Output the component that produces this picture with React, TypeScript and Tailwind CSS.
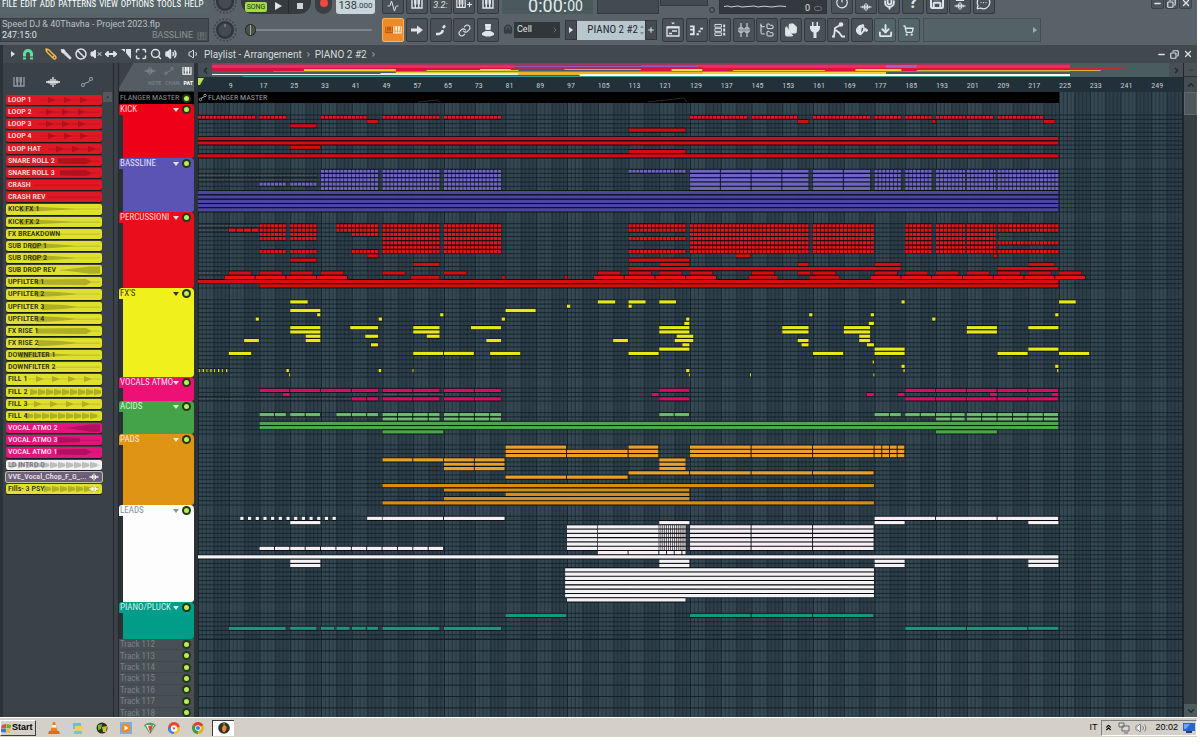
import type { ReactNode } from "react";
import clsx from "clsx";
import {
    Activity, Ban, Brush, ChevronDown, ChevronLeft, ChevronRight, ChevronUp, ChevronsUp,
    Copy, Download, Files, FolderTree, Link, Magnet, Maximize, MessageCircleMore, Mic, Minus,
    MoveHorizontal, Pencil, Plus, Pointer, Power, Save, Search, ShoppingCart,
    Volume1, Volume2, VolumeX, X,
} from "lucide-react";

const BAR = 3.844;
const ROW = 4.29;

// [row, first bar, last bar, segment length in bars, muted]
type Clip = [number, number, number, number?, boolean?];
type Group = { name: string; h: string; px: number; rows: number; bg: string; text: string; fill: string; soft: string; clips: Clip[] };

// puts the same bar ranges on several rows
const on = (rows: number[], ranges: [number, number, number?][]): Clip[] =>
    rows.flatMap((r) => ranges.map(([a, b, s]) => [r, a, b, s] as Clip));

const GROUPS: Group[] = [
    {
        name: "KICK", h: "h-[54px]", px: 54, rows: 10, bg: "bg-[#ee0019]", text: "text-[#ffd9d4]", fill: "#d30d14", soft: "#e61528",
        clips: [
            ...on([0], [[0, 15, 1], [16, 23, 1], [32, 36, 1], [36, 44, 1], [48, 63, 1], [64, 79, 1], [128, 143, 1], [144, 156, 1], [160, 175, 1], [176, 183, 1], [184, 191, 1], [192, 199.7, 1], [200, 207, 1], [208, 220, 1]]),
            ...on([1], [[44, 47], [156, 159], [191, 192], [220, 223]]),
            ...on([2], [[24, 31]]), ...on([3, 8], [[112, 127]]), ...on([5, 6, 9], [[0, 224]]), ...on([7], [[24, 32]]),
        ],
    },
    {
        name: "BASSLINE", h: "h-[54px]", px: 54, rows: 10, bg: "bg-[#5a55b4]", text: "text-[#e4e2ff]", fill: "#4b469f", soft: "#6c66c0",
        clips: [
            ...on([0, 1, 2, 3, 4], [[32, 47, 1], [48, 63, 1], [64, 79, 1], [128, 159, 8], [160, 175, 8], [176, 183, 1], [184, 191, 1], [192, 199.7, 1], [200, 207.7, 1], [208, 224, 1]]),
            ...on([0], [[112, 127, 1]]), ...on([3], [[16, 23, 1], [24, 31, 1]]),
            [1, 0, 31, 1, true], [2, 0, 31, 1, true],
            ...on([5, 6, 7, 8, 9], [[0, 224]]),
        ],
    },
    {
        name: "PERCUSSIONI", h: "h-[76px]", px: 76, rows: 15, bg: "bg-[#ea0e1c]", text: "text-[#ffd9d4]", fill: "#d40e12", soft: "#e2161a",
        clips: [
            [0, 0, 16, 1, true], [1, 0, 8, 1, true], [11, 0, 6, 1, true],
            ...on([0, 1, 2, 3, 6], [[16, 23, 1], [24, 31, 1]]),
            ...on([0], [[36, 47, 1]]), ...on([1], [[8, 16, 2], [36, 47, 1]]), ...on([2, 6], [[40, 47, 1]]),
            ...on([7], [[44, 47], [140, 143.8], [207, 208]]), ...on([8], [[24, 31], [112, 128]]),
            ...on([0, 1, 2, 3, 4, 5, 6], [[48, 63, 1], [64, 79, 1], [128, 159, 1], [160, 176, 1], [184, 191, 1], [192, 199.7, 1], [200, 207.7, 1]]),
            ...on([0, 1, 3, 6], [[112, 127, 1]]), ...on([0, 1, 4, 6], [[208, 224, 1]]),
            ...on([9], [[56, 63], [120, 128], [156, 159], [176, 183], [216, 223]]),
            ...on([10], [[112, 183], [208, 224]]),
            ...on([11], [[8, 14], [16, 22], [24, 30], [32, 38], [48, 54], [64, 70], [104, 110], [112, 118], [120, 126], [128, 134], [144, 150], [156, 159.5], [160, 166], [176, 182], [184, 190], [192, 198], [200, 206], [208, 214], [216, 222], [224, 230]]),
            ...on([12], [[7, 39, 8], [55.4, 63], [79, 80], [95.4, 96.2], [103, 135, 8], [143.3, 151], [159, 167], [175, 231, 8]]),
            ...on([13], [[0, 224]]), ...on([14], [[16, 224]]),
        ],
    },
    {
        name: "FX'S", h: "h-[89px]", px: 89, rows: 18, bg: "bg-[#f0f01c]", text: "text-[#3a3a08]", fill: "#e6e81c", soft: "#e6e81c",
        clips: [
            ...on([0], [[24, 28.7], [104, 108.7], [112, 116.6], [120, 124.5], [183, 184], [224, 228.5]]),
            ...on([1], [[96, 97], [112, 113]]), ...on([2], [[24, 32], [80, 88]]),
            ...on([3], [[31, 32], [63, 64], [159, 160], [175, 176], [223, 224]]),
            ...on([4], [[15, 16], [47, 48], [79, 80], [127, 128], [191, 192]]),
            ...on([5], [[126.5, 128], [174.5, 176]]),
            ...on([6], [[24, 32], [39.6, 47], [56, 63], [71, 79], [120, 128], [152, 159], [168, 175], [200, 208], [216, 224]]),
            ...on([7], [[24, 32], [56, 63], [120, 128], [152, 159], [168, 175], [200, 208]]),
            ...on([8], [[28, 32], [43.5, 47], [59.5, 63], [124.5, 129], [172, 175]]),
            ...on([9], [[12, 16], [28, 32], [75, 79], [108, 112], [124, 129], [156, 159], [172, 175]]),
            ...on([10], [[45, 47], [126, 128], [157, 159], [174, 176]]),
            ...on([11], [[120, 128], [176, 184], [216, 224]]),
            ...on([12], [[8, 14], [56, 72, 8], [76, 84], [112, 120], [160, 168], [176, 184], [208, 216], [224, 232]]),
            ...on([14], [[175.5, 176]]), ...on([15], [[183, 184], [223, 224]]),
            ...on([16], [[0.2, 0.6], [1.2, 1.7], [2.2, 2.5], [3.2, 3.7], [4.2, 4.5], [5.2, 5.7], [6.2, 6.5], [7.3, 7.8], [23, 23.8], [47, 47.8], [55.8, 56.1], [127, 128], [183.5, 184], [223.5, 224]]),
            ...on([17], [[23.7, 24], [127.7, 128], [143.6, 144], [175.7, 176]]),
        ],
    },
    {
        name: "VOCALS ATMO", h: "h-[24px]", px: 24, rows: 3, bg: "bg-[#ee1175]", text: "text-[#ffdcea]", fill: "#d60f66", soft: "#d60f66",
        clips: [
            ...on([0], [[16, 47, 8], [48, 63, 8], [64, 79, 8], [120, 128], [184, 224, 8]]),
            [1, 48, 64, 4, true], [2, 0, 40, 1, true],
            ...on([1], [[22, 24], [118, 120], [174, 176], [182, 184], [206, 208], [222, 224]]),
            ...on([2], [[40, 47, 4], [48, 63, 8], [64, 79, 8], [120, 128], [184, 224, 8]]),
        ],
    },
    {
        name: "ACIDS", h: "h-[33px]", px: 33, rows: 5, bg: "bg-[#44a349]", text: "text-[#d8f1d6]", fill: "#4fa451", soft: "#6bb873",
        clips: [
            ...on([0], [[16, 23, 4], [24, 32, 4], [36, 47, 4], [48, 63, 4], [64, 79, 4], [120, 128, 4], [176, 183, 4], [184, 192, 4], [192, 199.6, 4], [200, 224, 4]]),
            ...on([1], [[48, 63, 4], [64, 79, 4], [192, 199.6, 4], [200, 224, 4]]),
            ...on([2, 3], [[16, 224]]), ...on([4], [[48, 64], [192, 208]]),
        ],
    },
    {
        name: "PADS", h: "h-[71px]", px: 71, rows: 14, bg: "bg-[#e09414]", text: "text-[#ffeecb]", fill: "#d68d18", soft: "#e9a02a",
        clips: [
            ...on([0, 1, 2], [[80, 96, 16], [112, 120, 8], [128, 176, 16], [176, 184, 2]]),
            ...on([1, 2], [[96, 112, 16]]),
            ...on([3], [[48, 64, 8]]), ...on([3, 4, 5], [[64, 80, 8], [120, 127, 8]]),
            ...on([6], [[112, 176, 16]]), ...on([7], [[80, 112, 16]]),
            ...on([9, 13], [[48, 176]]), ...on([10, 12], [[64, 128]]), ...on([11], [[80, 128]]),
        ],
    },
    {
        name: "LEADS", h: "h-[97px]", px: 97, rows: 20, bg: "bg-[#fdfdfd]", text: "text-[#8b8f92]", fill: "#f4f2f4", soft: "#f6eef4",
        clips: [
            ...Array.from({ length: 13 }, (_, i) => [0, 11 + i * 2, 12 + i * 2] as Clip),
            ...on([0], [[44, 48], [48, 80, 16], [176, 224, 16]]),
            ...on([1, 10, 11], [[24, 32], [120, 128], [176, 184], [216, 224]]),
            ...on([2, 3, 4, 5, 6, 7], [[96, 104], [104, 120], [120, 127, 0.5], [128, 176, 16]]),
            ...on([7], [[16, 64, 4]]), ...on([8], [[104, 120, 8], [120, 127, 2]]),
            ...on([9], [[0, 224]]), ...on([12, 13, 14, 15, 16, 17, 18], [[95.5, 176]]), ...on([19], [[96, 127]]),
        ],
    },
    {
        name: "PIANO/PLUCK", h: "h-[37px]", px: 37, rows: 6, bg: "bg-[#009d88]", text: "text-[#c9f4ec]", fill: "#14997f", soft: "#14997f",
        clips: [
            ...on([0], [[80, 96], [128, 176, 16]]),
            ...on([3], [[8, 23], [24, 31], [32, 35.6], [36, 39.6], [40, 43.8], [44, 47], [48, 63], [64, 79], [184, 216, 16], [216, 224]]),
        ],
    },
];

const EMPTY_TRACKS = ["Track 112", "Track 113", "Track 114", "Track 115", "Track 116", "Track 117", "Track 118"];

type Wave = "beats" | "decay" | "rise" | "block" | "line" | "dense";
const SAMPLES: [string, string, Wave, number][] = [
    ["LOOP 1", "red", "beats", 34], ["LOOP 2", "red", "beats", 32], ["LOOP 3", "red", "beats", 32], ["LOOP 4", "red", "beats", 34],
    ["LOOP HAT", "red", "beats", 42], ["SNARE ROLL 2", "red", "block", 52], ["SNARE ROLL 3", "red", "block", 54], ["CRASH", "red", "line", 28],
    ["CRASH REV", "red", "line", 42], ["KICK FX 1", "yellow", "decay", 14], ["KICK FX 2", "yellow", "decay", 14], ["FX BREAKDOWN", "yellow", "line", 40],
    ["SUB DROP 1", "yellow", "decay", 24], ["SUB DROP 2", "yellow", "decay", 24], ["SUB DROP REV", "yellow", "rise", 54], ["UPFILTER 1", "yellow", "block", 30],
    ["UPFILTER 2", "yellow", "decay", 30], ["UPFILTER 3", "yellow", "decay", 36], ["UPFILTER 4", "yellow", "decay", 30], ["FX RISE 1", "yellow", "block", 30],
    ["FX RISE 2", "yellow", "decay", 32], ["DOWNFILTER 1", "yellow", "decay", 14], ["DOWNFILTER 2", "yellow", "line", 46], ["FILL 1", "yellow", "beats", 22],
    ["FILL 2", "yellow", "dense", 24], ["FILL 3", "yellow", "beats", 20], ["FILL 4", "yellow", "dense", 20], ["VOCAL ATMO 2", "pink", "rise", 60],
    ["VOCAL ATMO 3", "pink", "decay", 52], ["VOCAL ATMO 1", "pink", "block", 50], ["LD INTRO D", "white", "dense", 4],
    ["VVE_Vocal_Chop_F_G_...", "grey", "line", 64], ["Fills- 3 PSY", "yellow", "dense", 38],
];

const SAMPLE_COLORS: Record<string, string> = {
    red: "bg-[#e01826] text-[#ffe4e0]",
    yellow: "bg-[#dfe02e] text-[#2b2b08]",
    pink: "bg-[#e4157a] text-[#ffe4f0]",
    white: "bg-[#f2f2f4] text-[#77777c]",
    grey: "bg-[#6f6079] text-[#e8e4ea] ring-1 ring-[#b8c49a]",
};

function wavePath(kind: Wave, from: number) {
    const to = 94;
    const mid = 5;
    let d = `M${from} ${mid - 0.3}H${to}V${mid + 0.3}H${from}Z`;
    if (kind === "decay") d += `M${from} ${mid - 3}L${from + 22} ${mid - 2}L${to - 20} ${mid}L${from + 22} ${mid + 2}L${from} ${mid + 3}Z`;
    if (kind === "rise") d += `M${from} ${mid}L${to - 10} ${mid - 3.5}H${to}V${mid + 3.5}H${to - 10}Z`;
    if (kind === "block") d += `M${from} ${mid - 2.5}L${to - 14} ${mid - 3}L${to - 8} ${mid}L${to - 14} ${mid + 3}L${from} ${mid + 2.5}Z`;
    if (kind === "beats") for (let x = from + 8; x < to - 6; x += 16) d += `M${x} ${mid - 3}L${x + 7} ${mid - 0.5}V${mid + 0.5}L${x} ${mid + 3}Z`;
    if (kind === "dense") for (let x = from; x < to - 4; x += 8) d += `M${x} ${mid - 3}L${x + 7} ${mid - 1.5}V${mid + 1.5}L${x} ${mid + 3}Z`;
    return d;
}

function PianoIcon({ className }: { className?: string }) {
    return (
        <svg viewBox="0 0 12 10" className={className} fill="none" stroke="currentColor" strokeWidth="1.4">
            <path d="M1 0V9H11V0M4.3 0V9M7.7 0V9" />
            <path d="M4.3 0V5.5M7.7 0V5.5" strokeWidth="2.4" />
        </svg>
    );
}

function WaveIcon({ className }: { className?: string }) {
    return (
        <svg viewBox="0 0 14 10" className={className} fill="none" stroke="currentColor" strokeWidth="1.3">
            <path d="M0 5H14M3 3.5V6.5M5 2V8M7 0V10M9 2V8M11 3.5V6.5" />
        </svg>
    );
}

function AutomationIcon({ className }: { className?: string }) {
    return (
        <svg viewBox="0 0 12 10" className={className} fill="none" stroke="currentColor" strokeWidth="1.1">
            <circle cx="2" cy="8" r="1.5" />
            <circle cx="10" cy="2" r="1.5" />
            <path d="M3.2 7L5.5 5.5H7L9 3" />
        </svg>
    );
}

function ToolButton({ label, children, tone = "dark" }: { label: string; children: ReactNode; tone?: "dark" | "orange" | "teal" }) {
    return (
        <button
            aria-label={label}
            className={clsx(
                "flex h-6 w-[22px] shrink-0 items-center justify-center rounded-[2px] border text-[#dfe5e8]",
                tone === "dark" && "border-[#33393d] bg-[#4b5257]",
                tone === "orange" && "border-[#f9b25c] bg-[#ee8a2c] text-[#fff0d8]",
                tone === "teal" && "border-[#3d4a4c] bg-[#546568]",
            )}
        >
            {children}
        </button>
    );
}

function Knob() {
    return (
        <svg viewBox="0 0 24 24" className="h-6 w-6 shrink-0">
            <circle cx="12" cy="12" r="11" fill="none" stroke="#3c4347" strokeWidth="1.5" strokeDasharray="1.5 2" />
            <circle cx="12" cy="12" r="9" fill="#30363a" />
            <circle cx="12" cy="12" r="6.5" fill="#454c51" />
            <path d="M12 6V9" stroke="#8d979c" />
        </svg>
    );
}

function Toolbar() {
    return (
        <header className="flex h-[45px] shrink-0 overflow-hidden bg-[#596268] text-[#dfe5e8]">
            <div className="flex w-[209px] shrink-0 flex-col gap-1">
                <nav className="flex h-[14px] items-start gap-[3px] bg-[#566669] pl-[2px] font-['Roboto_Condensed','Roboto',sans-serif] text-[9px] leading-[9px] text-white">
                    {["FILE", "EDIT", "ADD", "PATTERNS", "VIEW", "OPTIONS", "TOOLS", "HELP"].map((item) => (
                        <button key={item}>{item}</button>
                    ))}
                </nav>
                <div className="flex h-6 flex-col justify-center border border-[#363d41] bg-[#444b50] px-px text-[9px] leading-[11px]">
                    <p className="text-[#b9c1c5]">Speed DJ &amp; 40Thavha - Project 2023.flp</p>
                    <div className="flex items-center">
                        <span className="grow">247:15:0</span>
                        <span className="text-[#8b9499]">BASSLINE</span>
                        <PianoIcon className="ml-1 h-[8px] w-[10px] text-[#646d72]" />
                    </div>
                </div>
            </div>

            <div className="flex w-[173px] shrink-0 flex-col gap-1 pl-1">
                <div className="flex h-[14px] items-end overflow-hidden">
                    <Knob />
                    <div className="ml-1 flex h-6 shrink-0 items-end overflow-hidden rounded-b-xl bg-[#353b3f]">
                        <button className="mb-[2px] ml-1 h-[10px] w-[22px] rounded-[2px] bg-[#a4dc46] text-[7px] leading-[10px] text-[#26330c]">SONG</button>
                        <button aria-label="Play" className="flex h-6 w-[22px] items-center justify-center border-r border-[#262b2e] pt-2">
                            <svg viewBox="0 0 8 8" className="h-2 w-2" fill="currentColor"><path d="M1 0L8 4L1 8Z" /></svg>
                        </button>
                        <button aria-label="Stop" className="flex h-6 w-[22px] items-center justify-center pt-2">
                            <span className="h-[6px] w-[6px] bg-[#cfd5d8]" />
                        </button>
                    </div>
                    <button aria-label="Record" className="ml-1 flex h-[22px] w-[17px] shrink-0 items-center justify-center rounded-full bg-[#3a4044]">
                        <span className="h-2 w-2 rounded-full bg-[#ef4a3c]" />
                    </button>
                    <span className="ml-1 flex h-[18px] w-[39px] shrink-0 items-end justify-center rounded-[3px] bg-[#c9d5da] pb-[3px] text-[11px] leading-[11px] text-[#2e3a40]">
                        138<small className="text-[8px] leading-[10px]">.000</small>
                    </span>
                </div>
                <div className="flex h-6 items-center">
                    <Knob />
                    <div className="relative ml-2 flex h-6 w-[127px] items-center">
                        <span className="absolute right-0 left-2 h-[2px] rounded bg-[#7d868b]" />
                        <input type="range" aria-label="Main pitch" min="0" max="100" defaultValue="0" className="absolute inset-0 m-0 h-6 w-full opacity-0" />
                        <span className="pointer-events-none relative flex h-3 w-[11px] justify-center rounded-full border border-[#1f2426] bg-[#4b524a]">
                            <i className="h-[10px] w-px bg-[#9fb07f]" />
                        </span>
                    </div>
                </div>
            </div>

            <div className="flex min-w-0 grow flex-col gap-1">
                <div className="flex h-[14px] items-end overflow-hidden">
                    <div className="flex w-[117px] shrink-0 justify-between">
                        <ToolButton label="Metronome"><Activity className="mt-2 h-3 w-3" /></ToolButton>
                        <ToolButton label="Wait for input"><PianoIcon className="mt-1 h-[10px] w-[14px]" /></ToolButton>
                        <ToolButton label="Countdown"><span className="mt-2 text-[9px] italic">3.2:</span></ToolButton>
                        <ToolButton label="Overdub"><PianoIcon className="mt-1 h-[10px] w-[10px]" /><Plus className="mt-1 h-[7px] w-[7px]" strokeWidth={4} /></ToolButton>
                        <ToolButton label="Loop recording"><PianoIcon className="mt-1 h-[10px] w-[14px]" /></ToolButton>
                    </div>
                    <div className="ml-[3px] flex h-6 w-[91px] shrink-0 items-end justify-center bg-[#4a595b] pl-4 text-[18px] leading-[16px] text-[#e4ecee]">
                        0:00:<span className="text-[14px] leading-[15px]">00</span>
                    </div>
                    <span className="ml-1 h-6 w-[62px] shrink-0 border border-[#33393d] bg-[#444b50]" />
                    <span className="mb-2 ml-px h-4 w-[48px] shrink-0 border border-[#33393d] bg-[#444b50]" />
                    <span className="mb-px ml-px h-[6px] w-[6px] shrink-0 rounded-full border border-[#2e3438]" />
                    <div className="ml-1 flex h-6 w-[108px] shrink-0 items-end gap-1 border border-[#2d3337] bg-[#33393e] px-1 text-[9px] leading-[9px]">
                        <svg viewBox="0 0 62 10" className="mb-1 h-[10px] w-[62px]" fill="none" stroke="#c9d0d4">
                            <path d="M0 7.5L4 7L7 8L10 7.5L14 7L18 8L24 7.5L30 7L34 8L40 7.2L48 8L55 7L62 7.5" />
                        </svg>
                        <span className="grow text-right">0</span>
                        <i className="mb-[2px] h-[5px] w-2 rounded-full border border-[#69737a]" />
                    </div>
                    <div className="ml-1 flex w-[164px] shrink-0 justify-between">
                        <ToolButton label="Restart"><Power className="h-[14px] w-[14px]" /></ToolButton>
                        <ToolButton label="Detach"><span className="flex flex-col items-center"><ChevronUp className="h-[10px] w-3" strokeWidth={4} /><WaveIcon className="h-[8px] w-3" /></span></ToolButton>
                        <ToolButton label="Record audio"><Mic className="h-[15px] w-[15px]" strokeWidth={3} /></ToolButton>
                        <ToolButton label="Help"><span className="text-[18px] leading-[20px] font-bold">?</span></ToolButton>
                        <ToolButton label="Save"><Save className="h-[16px] w-[16px]" strokeWidth={3} /></ToolButton>
                        <ToolButton label="Export audio"><span className="flex flex-col items-center gap-px"><i className="h-[7px] w-2 bg-[#dfe5e8]" /><WaveIcon className="h-[8px] w-3" /></span></ToolButton>
                        <ToolButton label="Messages"><MessageCircleMore className="h-[15px] w-[15px]" /></ToolButton>
                    </div>
                    <span className="grow" />
                    <div className="mr-[5px] mb-[5px] flex gap-px">
                        <button aria-label="Minimize" className="flex h-3 w-[13px] items-end justify-center rounded-[2px] border border-[#3c4347] bg-[#4d555a]"><Minus className="h-[9px] w-[9px]" strokeWidth={4} /></button>
                        <button aria-label="Restore" className="flex h-3 w-[13px] items-end justify-center rounded-[2px] border border-[#3c4347] bg-[#4d555a]"><Copy className="h-[9px] w-[9px] -scale-x-100" strokeWidth={3} /></button>
                        <button aria-label="Close" className="flex h-3 w-[13px] items-end justify-center rounded-[2px] border border-[#3c4347] bg-[#4d555a]"><X className="h-[10px] w-[10px]" strokeWidth={3} /></button>
                    </div>
                </div>

                <div className="flex h-6 items-center">
                    <div className="flex w-[117px] shrink-0 justify-between">
                        <ToolButton label="Typing keyboard" tone="orange"><PianoIcon className="h-[10px] w-[8px] text-[#b4520a]" /><PianoIcon className="h-[10px] w-[9px]" /></ToolButton>
                        <ToolButton label="Step edit">
                            <svg viewBox="0 0 12 10" className="h-[10px] w-3" fill="currentColor"><path d="M0 3.5H6V0.5L12 5L6 9.5V6.5H0Z" /></svg>
                        </ToolButton>
                        <ToolButton label="Note slide">
                            <svg viewBox="0 0 12 12" className="h-3 w-3" fill="none" stroke="currentColor" strokeWidth="2.5"><path d="M1 10H4M3.5 10Q8 9 7.5 6" /><path d="M8 4L10 1.5" /></svg>
                        </ToolButton>
                        <ToolButton label="Link controllers"><Link className="h-[13px] w-[13px]" /></ToolButton>
                        <ToolButton label="Wizard">
                            <svg viewBox="0 0 14 14" className="h-[14px] w-[14px]" fill="currentColor"><path d="M4 1H10L9.5 7H4.5Z" /><path d="M4.5 8H9.5L13 10V12L9 13.5H5L1 12V10Z" /></svg>
                        </ToolButton>
                    </div>
                    <Magnet className="ml-1 h-[10px] w-[10px] shrink-0 -rotate-45 text-[#353b3f]" strokeWidth={4} />
                    <div className="relative ml-px flex h-4 w-[46px] shrink-0 items-center bg-[#30363a] text-[9px]">
                        <select aria-label="Snap" className="h-4 w-full appearance-none bg-transparent pl-[3px] text-[#dfe5e8]"><option>Cell</option></select>
                        <ChevronRight className="pointer-events-none absolute right-px h-2 w-2 text-[#7c868b]" />
                    </div>
                    <button aria-label="Pattern menu" className="ml-[5px] flex h-5 w-3 shrink-0 items-center justify-center border border-[#33393d] bg-[#454c51]">
                        <svg viewBox="0 0 4 6" className="h-[6px] w-1" fill="currentColor"><path d="M0 0L4 3L0 6Z" /></svg>
                    </button>
                    <button className="flex h-[19px] w-[68px] shrink-0 items-center justify-end gap-[2px] bg-[#b9c8cf] pr-px text-right font-['Roboto_Condensed','Roboto',sans-serif] text-[11px] whitespace-nowrap text-[#1f2a30]">
                        PIANO 2 #2
                        <svg viewBox="0 0 4 10" className="h-[10px] w-1" fill="#7f9098"><path d="M0 3L2 0L4 3ZM0 7L2 10L4 7Z" /></svg>
                    </button>
                    <button aria-label="Add pattern" className="flex h-5 w-3 shrink-0 items-center justify-center border border-[#33393d] bg-[#454c51]"><Plus className="h-2 w-2" strokeWidth={3} /></button>
                    <div className="ml-[5px] flex w-[258px] shrink-0 justify-between">
                        <ToolButton label="Playlist">
                            <svg viewBox="0 0 14 16" className="h-4 w-[14px]" fill="none" stroke="currentColor"><path d="M5 0.5H9L7 2.5Z" fill="currentColor" stroke="none" /><path d="M1 5H13V14H1Z" strokeWidth="1.3" /><path d="M1 5.5H13" strokeWidth="2" /><path d="M3 11.5H6M6 9H11" strokeWidth="1.3" /></svg>
                        </ToolButton>
                        <ToolButton label="Piano roll">
                            <svg viewBox="0 0 16 14" className="h-[13px] w-[15px]" fill="none" stroke="currentColor" strokeWidth="2"><path d="M1 2.5H5V6H1M1 6H5V11H1M8 11H10.5M10 8H12.5M12 5H15" /></svg>
                        </ToolButton>
                        <ToolButton label="Channel rack">
                            <svg viewBox="0 0 14 14" className="h-[14px] w-[13px]" fill="none" stroke="currentColor"><path d="M1 1H8V4H1ZM1 5.5H8V8.5H1ZM1 10H8V13H1Z" /><path d="M11 1V13" strokeDasharray="3 1.5" strokeWidth="2" /></svg>
                        </ToolButton>
                        <ToolButton label="Mixer">
                            <svg viewBox="0 0 14 14" className="h-[14px] w-[14px]" fill="none" stroke="currentColor"><path d="M4 0V14M10 0V14" /><path d="M2 5H6V9H2ZM8 5H12V9H8Z" fill="#4b5257" /><path d="M4 5.5V8.5M10 5.5V8.5" /></svg>
                        </ToolButton>
                        <ToolButton label="Browser"><FolderTree className="h-4 w-4" strokeWidth={1.5} /></ToolButton>
                        <ToolButton label="Plugin picker"><Files className="h-[14px] w-[14px]" fill="currentColor" /></ToolButton>
                        <ToolButton label="Plugins">
                            <svg viewBox="0 0 12 16" className="h-4 w-3" fill="currentColor"><path d="M3 0H4.5V4H7.5V0H9V4H11V5.5Q11 9 7.5 10.5V16H4.5V10.5Q1 9 1 5.5V4H3Z" /></svg>
                        </ToolButton>
                        <ToolButton label="Tempo tapper">
                            <svg viewBox="0 0 14 16" className="h-4 w-[14px]" fill="none" stroke="currentColor" strokeWidth="1.5"><circle cx="10" cy="2.5" r="1.6" fill="currentColor" /><path d="M8.5 3.5L4 6L3 14.5H1M4.5 8L8 10.5L11 14.5H14" strokeWidth="1.8" /></svg>
                        </ToolButton>
                        <ToolButton label="Touch controller"><Pointer className="h-3 w-3 rotate-[120deg]" fill="currentColor" /></ToolButton>
                        <ToolButton label="Content library" tone="teal"><Download className="h-[15px] w-[15px]" strokeWidth={3} /></ToolButton>
                        <ToolButton label="Shop" tone="teal"><ShoppingCart className="h-[11px] w-[11px]" strokeWidth={3} /></ToolButton>
                    </div>
                    <button aria-label="News" className="ml-[3px] flex h-6 w-[118px] shrink-0 items-center justify-end border border-[#454f52] bg-[#536365] pr-[3px]">
                        <svg viewBox="0 0 4 6" className="h-[6px] w-1" fill="#9fadb0"><path d="M0 0L4 3L0 6Z" /></svg>
                    </button>
                </div>
            </div>
        </header>
    );
}

function TitleBar() {
    const icon = "h-3 w-3";
    return (
        <div className="flex h-[18px] shrink-0 items-center bg-[#41494e] text-[#dce2e5]">
            <button aria-label="Playlist menu" className="flex w-[19px] justify-center">
                <svg viewBox="0 0 4 6" className="h-[6px] w-1" fill="currentColor"><path d="M0 0L4 3L0 6Z" /></svg>
            </button>
            <button aria-label="Snap to grid">
                <svg viewBox="0 0 12 12" className={icon} fill="none" stroke="#5fe09c" strokeWidth="3"><path d="M2.5 11.5V6A3.5 3.5 0 0 1 9.5 6V11.5" /><path d="M0.5 9H4.5M7.5 9H11.5" stroke="#41494e" strokeWidth="1" /></svg>
            </button>
            <div className="ml-[11px] flex gap-[3px]">
                <button aria-label="Draw"><Pencil className="h-3 w-3 rotate-90 text-[#f3b64c]" strokeWidth={3} /></button>
                <button aria-label="Paint"><Brush className={clsx(icon, "-scale-y-100")} fill="currentColor" /></button>
                <button aria-label="Delete"><Ban className={icon} strokeWidth={3} /></button>
                <button aria-label="Mute"><VolumeX className={icon} fill="currentColor" /></button>
                <button aria-label="Slip"><MoveHorizontal className={icon} strokeWidth={4} /></button>
                <button aria-label="Slice">
                    <svg viewBox="0 0 12 12" className={icon} fill="currentColor"><path d="M1 1H5V4ZM6 1H11V11L6 5Z" /></svg>
                </button>
                <button aria-label="Select"><Maximize className={icon} strokeWidth={3} /></button>
                <button aria-label="Zoom"><Search className={icon} strokeWidth={3} /></button>
                <button aria-label="Playback"><Volume2 className={icon} fill="currentColor" strokeWidth={3} /></button>
            </div>
            <Volume1 className="ml-[11px] h-3 w-3" />
            <div className="ml-1 flex grow items-center gap-[3px] text-[10px] text-[#d3dadd]">
                <span>Playlist - Arrangement</span>
                <ChevronRight className="h-[7px] w-[7px] text-[#838d92]" strokeWidth={4} />
                <span>PIANO 2 #2</span>
                <ChevronRight className="h-[7px] w-[7px] text-[#838d92]" strokeWidth={4} />
            </div>
            <div className="flex items-center gap-1 pr-1">
                <button aria-label="Minimize playlist"><Minus className="h-[9px] w-[9px]" strokeWidth={4} /></button>
                <button aria-label="Restore playlist"><Copy className="h-[9px] w-[9px] -scale-x-100" strokeWidth={3} /></button>
                <button aria-label="Close playlist"><X className="h-[10px] w-[10px]" strokeWidth={3} /></button>
            </div>
        </div>
    );
}

function Picker() {
    return (
        <aside className="flex w-[110px] shrink-0 flex-col bg-[#3a4147]">
            <div className="flex h-[29px] items-end justify-between pr-5 pb-[5px] pl-[10px] text-[#8d979c]">
                <button aria-label="Patterns"><PianoIcon className="h-[10px] w-[12px]" /></button>
                <button aria-label="Audio clips" className="text-[#e9eef0]"><WaveIcon className="h-[10px] w-[14px]" /></button>
                <button aria-label="Automation clips"><AutomationIcon className="h-[10px] w-[12px]" /></button>
            </div>
            <div className="flex">
                <ul className="mt-[3px] ml-[3px] grid h-[401px] w-24 auto-rows-fr font-['Roboto_Condensed','DejaVu_Sans_Condensed',sans-serif] text-[8px] leading-[10px] font-medium">
                    {SAMPLES.map(([name, color, wave, from]) => (
                        <li key={name} className={clsx("relative mb-[2px] overflow-hidden rounded-[2px] shadow-[0_1px_0_#15191c]", SAMPLE_COLORS[color])}>
                            <svg viewBox="0 0 96 10" preserveAspectRatio="none" className="absolute inset-0 h-full w-full">
                                <path d={wavePath(wave, from)} fill="#000" opacity="0.22" />
                            </svg>
                            <span className="relative block truncate pl-[2px]">{name}</span>
                            {(color === "grey" || name === "Fills- 3 PSY") && <WaveIcon className="absolute top-px right-[3px] h-2 w-[10px] text-white" />}
                        </li>
                    ))}
                </ul>
                <button aria-label="Picker scroll" className="ml-px h-[10px] w-[9px] bg-[#525a60] text-[6px] leading-[8px] text-[#20262a]">▪</button>
            </div>
        </aside>
    );
}

function Led() {
    return (
        <button aria-label="Mute track" className="flex h-[9px] w-[9px] shrink-0 items-center justify-center rounded-full bg-[#27351b]">
            <span className="h-[5px] w-[5px] rounded-full bg-[#b5ee58]" />
        </button>
    );
}

function TrackHeaders() {
    return (
        <div className="flex w-[75px] shrink-0 flex-col font-['Roboto_Condensed','DejaVu_Sans_Condensed',sans-serif]">
            <div className="flex h-7 shrink-0 flex-col items-end gap-[3px] bg-[linear-gradient(120deg,#3a4147_12px,#545d63_13px)] pt-1 pr-px text-[#7d878c]">
                <div className="flex gap-[6px]">
                    <WaveIcon className="h-[8px] w-[14px]" />
                    <AutomationIcon className="h-[8px] w-[12px]" />
                    <PianoIcon className="h-[8px] w-[12px] text-white" />
                </div>
                <p className="flex gap-1 text-[6px] leading-[9px]"><span>NOTE</span><span>CHAN</span><b className="text-white">PAT</b></p>
            </div>
            <div className="mt-px flex h-3 shrink-0 items-center bg-black px-px text-[8px] whitespace-nowrap text-[#8b8f92]">
                <span className="w-[62px] shrink-0">FLANGER MASTER</span>
                <Led />
            </div>
            {GROUPS.map((g) => (
                <div key={g.name} className={clsx("relative flex shrink-0 items-start rounded-[3px] rounded-tr-[4px] px-px", g.h, g.bg, g.text)}>
                    <span className="w-[53px] shrink-0 text-[9px] leading-[10px] whitespace-nowrap">{g.name}</span>
                    <svg viewBox="0 0 6 4" className="mt-1 mr-[3px] h-1 w-[6px] shrink-0" fill="currentColor"><path d="M0 0H6L3 4Z" /></svg>
                    <span className="pt-px"><Led /></span>
                    <span className="absolute top-[11px] bottom-0 left-0 w-1 bg-[#2a3136]" />
                </div>
            ))}
            <div className="grid h-20 shrink-0 auto-rows-fr bg-[#485056] text-[9px] leading-[10px] text-[#798287]">
                {EMPTY_TRACKS.map((name) => (
                    <div key={name} className="flex items-center border-b border-[#42494e] px-px">
                        <span className="w-[62px] shrink-0">{name}</span>
                        <Led />
                    </div>
                ))}
            </div>
        </div>
    );
}

// [first bar, y, length in bars, height, colour]
const MINIMAP: [number, number, number, number, string][] = [
    [0, 1, 224, 5, "#ee2a63"], [0, 1, 224, 1, "#a0375f"], [79, 2, 33, 5, "#8b3a68"], [79, 3, 48, 1, "#8f5bc0"],
    [112, 4, 16, 4, "#97355a"], [176, 2, 8, 3, "#a95cc0"], [0, 5, 79, 3, "#d4143e"], [112, 5, 112, 3, "#dc1638"], [79, 5, 33, 2, "#a53350"],
    [24, 6, 24, 1, "#f1c22c"], [70, 6, 8, 1, "#f1dd2c"], [92, 6, 20, 1, "#e2a42a"], [24, 7, 24, 1, "#e8d32a"], [56, 7, 24, 2, "#d3cf45"],
    [80, 8, 48, 1, "#b8c82d"], [120, 6, 8, 2, "#efe53a"], [136, 7, 24, 2, "#f4c62c"], [168, 6, 12, 2, "#f4d62c"], [184, 7, 48, 1, "#d4b545"], [224, 5, 14, 1, "#c22840"],
    [16, 8, 208, 1, "#5d9a58"], [48, 9, 80, 2, "#d9d036"], [80, 9, 48, 3, "#f0ae32"], [128, 9, 48, 2, "#f4cc46"],
    [0, 11, 80, 1, "#f0efe8"], [44, 10, 36, 1, "#d8e3d8"], [96, 11, 128, 2, "#fffbe8"], [8, 13, 216, 1, "#3c9c98"],
];

function Clips({ group, top }: { group: Group; top: number }) {
    const first = top + group.px - group.rows * ROW;
    return (
        <g>
            {Array.from({ length: group.rows + 1 }, (_, i) => (
                <rect key={i} x="0" y={first + i * ROW - 0.5} width="100%" height="1" fill="#101d26" opacity="0.75" />
            ))}
            {group.clips.map(([row, a, b, seg, muted], i) => {
                const y = first + (row + 0.5) * ROW;
                const x1 = a * BAR;
                const x2 = Math.max(b * BAR - 0.6, x1 + 1);
                const len = seg ? seg * BAR : 0;
                const gap = seg && seg > 1 ? 0.9 : 0.6;
                return (
                    <g key={i} opacity={muted ? 0.4 : 1}>
                        <rect x={x1 - 0.3} y={y - 2.3} width={x2 - x1 + 0.6} height="4.6" rx="1" fill="#000" opacity={muted ? 0.4 : 0.7} />
                        <line
                            x1={x1} x2={x2} y1={y} y2={y}
                            stroke={muted ? "#7a6b74" : seg ? group.soft : group.fill}
                            strokeWidth={muted ? 1.4 : 3.2}
                            strokeDasharray={seg ? `${len - gap} ${gap}` : undefined}
                        />
                    </g>
                );
            })}
        </g>
    );
}

function Arrangement() {
    let top = 12;
    const tops = GROUPS.map((g) => {
        const t = top;
        top += g.px;
        return t;
    });
    return (
        <svg className="min-h-0 w-full grow bg-[#2e3f4a]" aria-label="Arrangement">
            <defs>
                <pattern id="bars" width={BAR * 8} height="40" patternUnits="userSpaceOnUse">
                    <rect width={BAR * 4} height="40" fill="#364953" />
                    {[0, 1, 2, 3, 4, 5, 6, 7].map((i) => (
                        <rect key={i} x={i * BAR} width="1" height="40" fill="#101d26" opacity={i % 4 === 0 ? 0.85 : i % 2 ? 0.45 : 0.6} />
                    ))}
                </pattern>
            </defs>
            <rect width="100%" height="100%" fill="url(#bars)" />
            {EMPTY_TRACKS.map((name, i) => (
                <rect key={name} y={top + i * 11.4} width="100%" height="1" fill="#101d26" opacity="0.9" />
            ))}
            <rect width={224 * BAR} height="11" fill="#000" />
            <path d="M220 10L240 8L242 10M450 10L486 6L489 10" fill="none" stroke="#2b2b2b" />
            <g fill="none" stroke="#a0a6a8"><circle cx="2.5" cy="7.5" r="1.2" /><circle cx="7" cy="3.5" r="1.2" /><path d="M3 6.5L6.5 4.5" /></g>
            <text x="10" y="8" fill="#9a9fa2" className="font-['Roboto_Condensed','DejaVu_Sans_Condensed',sans-serif] text-[8px]">FLANGER MASTER</text>
            {GROUPS.map((g, i) => <Clips key={g.name} group={g} top={tops[i]} />)}
        </svg>
    );
}

function Timeline() {
    const marks = Array.from({ length: 31 }, (_, i) => 9 + i * 8);
    return (
        <div className="flex min-w-0 grow flex-col">
            <div className="flex h-[14px] shrink-0 bg-[#4b5c5f]">
                <button aria-label="Scroll left" className="flex w-[14px] items-center justify-center bg-[#464f54] text-[#22292d]"><ChevronLeft className="h-[9px] w-[9px]" strokeWidth={4} /></button>
                <svg className="h-[14px] min-w-0 grow">
                    {MINIMAP.map(([bar, y, len, h, fill], i) => (
                        <rect key={i} x={bar * 3.83} y={y} width={len * 3.83} height={h} fill={fill} />
                    ))}
                </svg>
                <button aria-label="Scroll right" className="flex w-[14px] items-center justify-center bg-[#464f54] text-[#22292d]"><ChevronRight className="h-[9px] w-[9px]" strokeWidth={4} /></button>
            </div>
            <svg className="h-[15px] w-full shrink-0 bg-[#22303a] font-['Roboto_Condensed','Roboto',sans-serif] text-[8px]" fill="#c0cace">
                <path d="M0 1H6L2 8H0Z" fill="#b4e34c" />
                {marks.map((m) => (
                    <text key={m} x={(m - 1) * BAR} y="11">{m}</text>
                ))}
            </svg>
            <Arrangement />
        </div>
    );
}

function VerticalScroll() {
    return (
        <div className="flex w-[14px] shrink-0 flex-col border-l border-[#20272b] bg-[#363d43] text-[#1f262a]">
            <button aria-label="Zoom out" className="flex h-[14px] items-center justify-center border-b border-[#2b3236] bg-[#4a5257]"><Minus className="h-[6px] w-[6px]" /></button>
            <button aria-label="Scroll up" className="flex h-[15px] items-center justify-center bg-[#454d52]"><ChevronUp className="h-[10px] w-[10px]" strokeWidth={3} /></button>
            <div className="h-[23px] border border-[#60686d] bg-[#50585d]" />
            <div className="grow" />
            <button aria-label="Scroll down" className="flex h-[13px] items-center justify-center bg-[#4a5a5d]"><ChevronDown className="h-[10px] w-[10px]" strokeWidth={3} /></button>
        </div>
    );
}

function Taskbar() {
    return (
        <footer className="flex h-5 shrink-0 items-center border-t border-white bg-[#d4d0c8] font-['Liberation_Sans',sans-serif] text-[9px] text-black">
            <button className="flex h-4 w-9 items-center gap-px border border-t-white border-r-[#404040] border-b-[#404040] border-l-white font-bold">
                <svg viewBox="0 0 10 10" className="h-[10px] w-[10px] shrink-0">
                    <path d="M1 2L5 1V5L0 5.5Z" fill="#e2512a" /><path d="M5.5 1L10 2L9.5 5.5L5.5 5Z" fill="#63ac3e" />
                    <path d="M0 6L5 5.5V9.5L0 9Z" fill="#3b78d4" /><path d="M5.5 5.5L9.5 6L9 10L5.5 9.5Z" fill="#efc02c" />
                </svg>
                Start
            </button>
            <div className="ml-3 flex items-center gap-3">
                <button aria-label="Media player">
                    <svg viewBox="0 0 12 12" className="h-3 w-3"><path d="M5 0H7L9.5 9H2.5Z" fill="#ee7d1d" /><path d="M4.2 3H7.8L8.4 5.5H3.6Z" fill="#fff" /><path d="M1 9H11L12 12H0Z" fill="#e06d13" /></svg>
                </button>
                <button aria-label="File explorer">
                    <svg viewBox="0 0 12 12" className="h-3 w-3"><path d="M1 1H9V7H1Z" fill="#6fbcd6" /><path d="M3 4H11V10H3Z" fill="#efcf5d" /><path d="M2 9H10V12H2Z" fill="#74c4de" /></svg>
                </button>
                <button aria-label="Downloads">
                    <svg viewBox="0 0 12 12" className="h-3 w-3"><circle cx="6" cy="6" r="5.5" fill="#263417" /><path d="M2 3L6 2L5 7L2 8Z" fill="#79b433" /><path d="M6 5L11 4L10 10L7 10Z" fill="#d9b832" /></svg>
                </button>
                <button aria-label="Video player">
                    <svg viewBox="0 0 12 12" className="h-3 w-3"><path d="M0 0H12V12H0Z" fill="#80aedb" /><circle cx="6" cy="6" r="4.5" fill="#ef8a1f" /><path d="M4.5 3.5L8.5 6L4.5 8.5Z" fill="#fff" /></svg>
                </button>
                <button aria-label="Antivirus">
                    <svg viewBox="0 0 12 12" className="h-3 w-3"><path d="M0 3Q6 -2 12 3L6 12Z" fill="#4d9b6f" /><path d="M2 3H10L6 11Z" fill="#fff" /><path d="M4 4L9 3L6.5 12Z" fill="#c65039" /></svg>
                </button>
                <button aria-label="Browser beta">
                    <svg viewBox="0 0 12 12" className="h-3 w-3"><circle cx="6" cy="6" r="6" fill="#e8452f" /><path d="M6 6L12 5A6 6 0 0 1 5 12Z" fill="#f4c22d" /><path d="M6 6L0 5A6 6 0 0 0 6 12Z" fill="#3f82e6" /><circle cx="6" cy="6.5" r="3.2" fill="#fff" /><path d="M4.5 5.5H7.5L6 8Z" fill="#e8452f" /></svg>
                </button>
                <button aria-label="Browser">
                    <svg viewBox="0 0 12 12" className="h-3 w-3"><circle cx="6" cy="6" r="6" fill="#e2b520" /><path d="M6 6L0.8 3A6 6 0 0 1 11.2 3Z" fill="#dc4234" /><path d="M6 6L0.8 3A6 6 0 0 0 6 12Z" fill="#3d9c4d" /><circle cx="6" cy="6" r="2.8" fill="#fff" /><circle cx="6" cy="6" r="2.1" fill="#3f7ee0" /></svg>
                </button>
                <button aria-label="Music studio" className="-ml-1 flex h-4 w-[22px] items-center justify-center border-t border-l border-[#404040] bg-white">
                    <svg viewBox="0 0 12 12" className="h-3 w-3"><circle cx="6" cy="6" r="5.8" fill="#2f3234" /><path d="M6 3Q10 4 8 8Q6 12 4.5 9Q3 5 6 3Z" fill="#ee8a2a" /><path d="M5 1L7 1.5L6 4Z" fill="#6fb83a" /></svg>
                </button>
            </div>
            <span className="grow" />
            <span className="mr-1">IT</span>
            <div className="flex h-4 items-center gap-[5px] border border-t-[#808080] border-r-white border-b-white border-l-[#808080] pr-px pl-[2px]">
                <ChevronsUp className="h-[9px] w-[9px]" strokeWidth={3} />
                <svg viewBox="0 0 12 12" className="h-3 w-3" fill="#d8d8d8" stroke="#666"><path d="M1 1H6V5H1ZM4 4H11V9H4ZM6 11H10" /></svg>
                <Volume2 className="h-3 w-3 text-[#777]" fill="#eee" />
                <span className="ml-[3px]">20:02</span>
                <svg viewBox="0 0 12 10" className="h-[10px] w-3"><path d="M0 0H12V8H0Z" fill="#2766cf" /><path d="M1 1H7L3 6H1Z" fill="#6fa3ee" /><path d="M3 8H9V10H3Z" fill="#1d3e80" /></svg>
            </div>
        </footer>
    );
}

export default function App() {
    return (
        <div className="flex h-screen flex-col overflow-hidden bg-white pr-[3px] pb-[13px] font-['Roboto','Noto_Sans',sans-serif]">
            <Toolbar />
            <main className="flex min-h-0 grow flex-col border-l-[3px] border-[#2c3338] bg-[#2c3338]">
                <TitleBar />
                <div className="flex min-h-0 grow overflow-hidden">
                    <Picker />
                    <div className="w-[6px] shrink-0 border-x border-[#22282c] bg-[#3a4147]" />
                    <TrackHeaders />
                    <div className="w-[4px] shrink-0" />
                    <Timeline />
                    <VerticalScroll />
                </div>
            </main>
            <Taskbar />
        </div>
    );
}
